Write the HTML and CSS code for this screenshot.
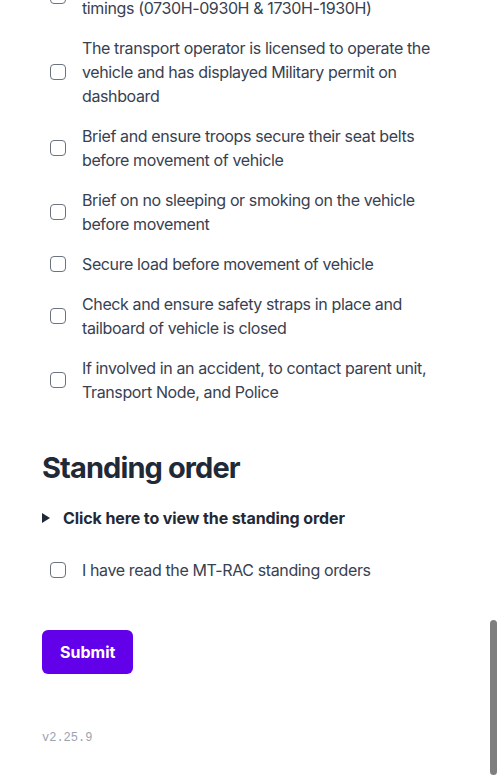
FILE: index.html
```html
<!DOCTYPE html>
<html lang="en">
<head>
<meta charset="utf-8">
<title>Checklist</title>
<link rel="stylesheet" href="styles.css">
</head>
<body>
<main class="page">
  <ul class="checklist">
    <li><label class="check"><input type="checkbox" class="box"><span>Ensure vehicle movement is outside restricted<br>timings (0730H-0930H &amp; 1730H-1930H)</span></label></li>
    <li><label class="check"><input type="checkbox" class="box"><span>The transport operator is licensed to operate the vehicle and has displayed Military permit on dashboard</span></label></li>
    <li><label class="check"><input type="checkbox" class="box"><span>Brief and ensure troops secure their seat belts before movement of vehicle</span></label></li>
    <li><label class="check"><input type="checkbox" class="box"><span>Brief on no sleeping or smoking on the vehicle before movement</span></label></li>
    <li><label class="check"><input type="checkbox" class="box"><span>Secure load before movement of vehicle</span></label></li>
    <li><label class="check"><input type="checkbox" class="box"><span>Check and ensure safety straps in place and tailboard of vehicle is closed</span></label></li>
    <li><label class="check"><input type="checkbox" class="box"><span>If involved in an accident, to contact parent unit, Transport Node, and Police</span></label></li>
  </ul>

  <h2 class="section-title">Standing order</h2>

  <details class="order">
    <summary class="order-summary"><span class="tri"></span>Click here to view the standing order</summary>
  </details>

  <label class="check read"><input type="checkbox" class="box"><span>I have read the MT-RAC standing orders</span></label>

  <button class="submit" type="button">Submit</button>

  <p class="version">v2.25.9</p>
</main>
<div class="scroll-thumb"></div>
</body>
</html>
```
FILE: styles.css
```css
html, body {
  margin: 0;
  padding: 0;
  overflow: hidden;
  background: #ffffff;
}
body {
  font-family: Inter, "Liberation Sans", sans-serif;
  font-size: 16px;
  line-height: 24px;
  color: #374151;
}
.page {
  margin-top: -28px;
  padding: 0 42px 30px 42px;
  display: flex;
  flex-direction: column;
  align-items: flex-start;
}
.checklist {
  list-style: none;
  margin: 0;
  padding: 0;
  display: flex;
  flex-direction: column;
  gap: 16px;
  width: 100%;
}
.check {
  display: flex;
  align-items: center;
  gap: 16px;
  padding: 0 0 0 8px;
  letter-spacing: -0.38px;
}
.box {
  appearance: none;
  -webkit-appearance: none;
  flex: 0 0 16px;
  width: 16px;
  height: 16px;
  margin: 0;
  border: 1.5px solid #6b7280;
  border-radius: 4px;
  background: #fff;
  box-sizing: border-box;
}
.section-title {
  margin: 46px 0 0 0;
  font-size: 29px;
  line-height: 36px;
  font-weight: 700;
  color: #1f2937;
  letter-spacing: -0.9px;
}
.order {
  margin-top: 20px;
}
.order-summary {
  list-style: none;
  display: flex;
  align-items: center;
  gap: 13px;
  font-weight: 700;
  color: #1f2937;
  letter-spacing: -0.1px;
  cursor: pointer;
}
.order-summary::-webkit-details-marker {
  display: none;
}
.tri {
  width: 0;
  height: 0;
  border-top: 5px solid transparent;
  border-bottom: 5px solid transparent;
  border-left: 8px solid #1f2937;
}
.read {
  margin-top: 28px;
}
.submit {
  margin-top: 48px;
  height: 44px;
  padding: 0 18px;
  border: none;
  border-radius: 6px;
  background: #6200ea;
  color: #ffffff;
  font-family: Inter, "Liberation Sans", sans-serif;
  font-size: 16px;
  font-weight: 700;
}
.version {
  margin: 56px 0 0 0;
  font-family: "Liberation Mono", "DejaVu Sans Mono", monospace;
  font-size: 12px;
  line-height: 16px;
  color: #9ca3af;
}
.scroll-thumb {
  position: fixed;
  right: 3px;
  top: 620px;
  width: 7px;
  height: 155px;
  border-radius: 4px;
  background: #7f7f7f;
}
```
